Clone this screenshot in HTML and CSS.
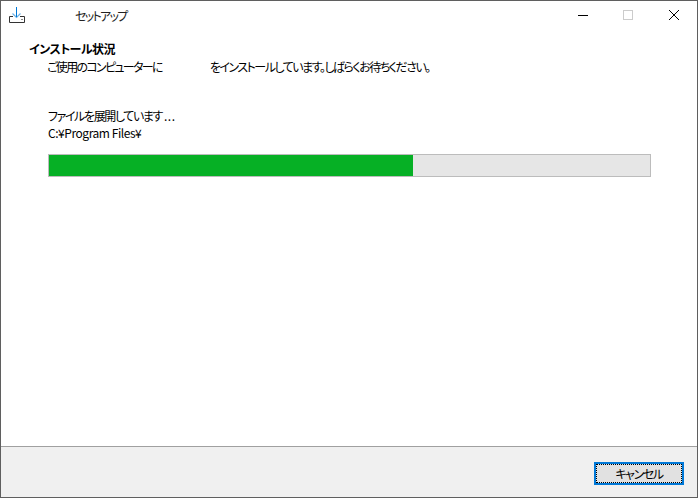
FILE: index.html
```html
<!DOCTYPE html>
<html>
<head>
    <title>セットアップ</title>
    <link rel="stylesheet" href="styles.css">
</head>
<body>
    <div class="window">
        <div class="titlebar">
            <svg class="app-icon" width="18" height="17" viewBox="0 0 18 17">
                <path d="M5 9.5H1.5V15.5H16.5V9.5H12" stroke="#333" stroke-width="1" fill="none"/>
                <path d="M13 12.5H15" stroke="#888" stroke-width="1"/>
                <path d="M4.5 6.5L8.5 10.5L12.5 6.5" stroke="#6db3e8" stroke-width="1.2" fill="none"/>
                <path d="M8.5 0V10" stroke="#0078d7" stroke-width="1" fill="none"/>
            </svg>
            <span class="title">セットアップ</span>
            <div class="controls">
                <svg class="ctl" width="46" height="30" viewBox="0 0 46 30"><path d="M19 14.5H29" stroke="#000" fill="none"/></svg>
                <svg class="ctl" width="46" height="30" viewBox="0 0 46 30"><rect x="18.5" y="9.5" width="9" height="9" stroke="#ccc" fill="none"/></svg>
                <svg class="ctl" width="46" height="30" viewBox="0 0 46 30"><path d="M18 9L28 19M28 9L18 19" stroke="#000" fill="none"/></svg>
            </div>
        </div>
        <div class="content">
            <h1>インストール状況</h1>
            <p class="intro"><span class="intro-lead">ご使用のコンピューターに</span><span class="blank"></span>をインストールしています。しばらくお待ちください。</p>
            <p class="status">ファイルを展開しています<span class="dots">...</span></p>
            <p class="path">C:¥Program Files¥</p>
            <div class="progress"><div class="progress-fill" style="width: 60.5%"></div></div>
        </div>
        <div class="footer">
            <button class="btn"><span class="btn-label">キャンセル</span></button>
        </div>
    </div>
</body>
</html>
```

FILE: styles.css
```css
html, body {
    height: 100%;
}
body {
    margin: 0px;
    background-color: #fff;
    color: #000;
    font-family: "Noto Sans CJK JP", "Noto Sans", sans-serif;
    font-size: 12px;
    font-feature-settings: "palt";
}
.window {
    box-sizing: border-box;
    height: 498px;
    border: 1px solid #5f5f5f;
    display: flex;
    flex-direction: column;
}
.titlebar {
    height: 30px;
    display: flex;
    align-items: center;
    flex-shrink: 0;
}
.app-icon {
    align-self: flex-start;
    margin: 6px 0 0 7px;
}
.title {
    margin-left: 49px;
    margin-top: -1px;
    color: #222;
    letter-spacing: -1.7px;
}
.controls {
    margin-left: auto;
    display: flex;
}
.ctl {
    display: block;
}
.content {
    flex: 1;
    padding: 9px 46px 0 46px;
}
h1 {
    margin: 0 0 0 -18px;
    font-size: 12px;
    line-height: 18px;
    font-weight: bold;
    letter-spacing: -0.5px;
}
p {
    margin: 0;
    line-height: 17px;
}
.intro {
    letter-spacing: -1.5px;
}
.intro-lead {
    letter-spacing: -1.7px;
}
.blank {
    display: inline-block;
    width: 48px;
}
.status {
    margin: 32px 0 0 1px;
    letter-spacing: -1.4px;
}
.path {
    margin-left: 1px;
    letter-spacing: -0.45px;
}
.dots {
    letter-spacing: 0.6px;
    margin-left: 2px;
}
.progress {
    box-sizing: border-box;
    height: 23px;
    margin: 13px 0 0 1px;
    border: 1px solid #bcbcbc;
    background-color: #e6e6e6;
}
.progress-fill {
    height: 100%;
    background-color: #06b025;
}
.footer {
    height: 51px;
    flex-shrink: 0;
    box-sizing: border-box;
    border-top: 1px solid #a0a0a0;
    background-color: #f0f0f0;
    display: flex;
    justify-content: flex-end;
    padding: 15px 13px 0 0;
}
.btn {
    box-sizing: border-box;
    width: 90px;
    height: 23px;
    padding: 0;
    border: 2px solid #0078d7;
    background-color: #e1e1e1;
    font-family: inherit;
    font-size: 12px;
    font-feature-settings: inherit;
    color: #000;
    display: flex;
}
.btn-label {
    flex: 1;
    border: 1px dotted #000;
    line-height: 17px;
    text-align: center;
    letter-spacing: -1.4px;
}
```
